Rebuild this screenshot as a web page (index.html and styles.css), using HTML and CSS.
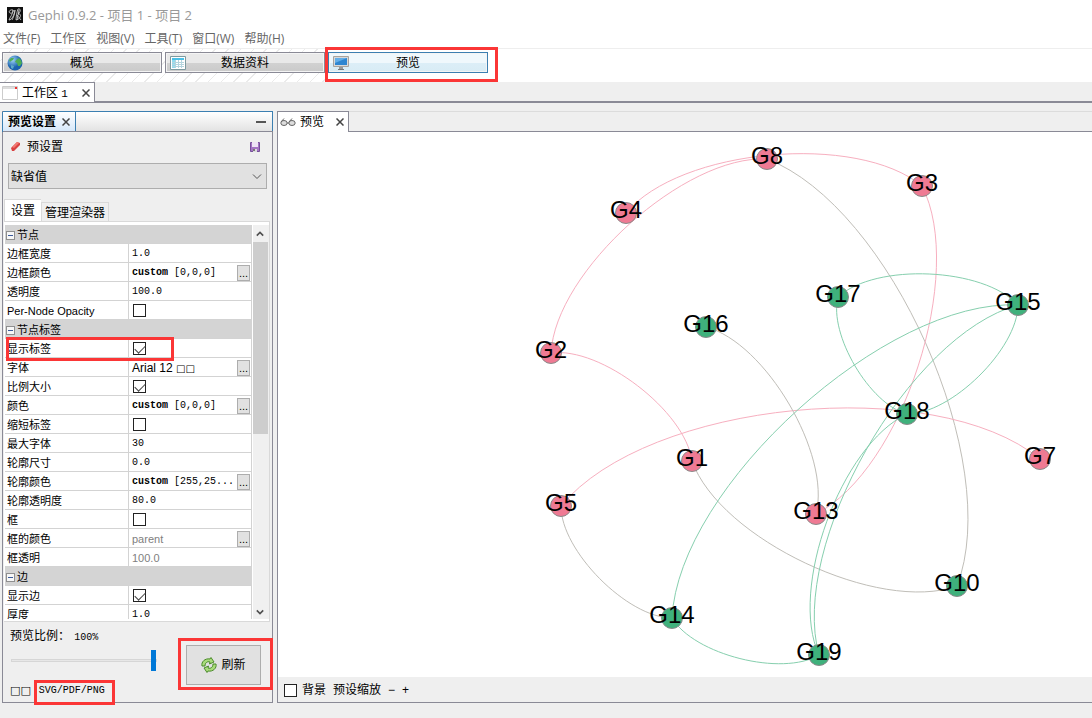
FILE: index.html
```html
<!DOCTYPE html>
<html lang="zh-CN">
<head>
<meta charset="utf-8">
<title>Gephi 0.9.2 - 项目 1 - 项目 2</title>
<link rel="stylesheet" href="styles.css">
</head>
<body>
<div class="app">
  <header class="titlebar">
    <svg class="logo" viewBox="0 0 16 16" aria-hidden="true"><rect width="16" height="16" fill="#111"/><path d="M6 3C3 2 1 5 3 6s4-2 3-3M6 3C6 7 3 10 2 13M2 13c3 0 5-5 6-10M8 3c0 4-2 8-3 10M9 13c0-4 1-8 2-11 3-1 3 3 0 5 4-1 3 5-2 6M10 8l4 5M12 3l-2 10" fill="none" stroke="#ddd" stroke-width=".8"/></svg>
    <span>Gephi 0.9.2 - 项目 1 - 项目 2</span>
  </header>
  <nav class="menubar">
    <button>文件(F)</button><button>工作区</button><button>视图(V)</button><button>工具(T)</button><button>窗口(W)</button><button>帮助(H)</button>
  </nav>
  <div class="modes">
    <button class="mode">
      <svg viewBox="0 0 16 16" aria-hidden="true"><defs><radialGradient id="sea" cx=".35" cy=".3"><stop offset="0" stop-color="#9fd4f5"/><stop offset="1" stop-color="#1b62ae"/></radialGradient></defs><circle cx="8" cy="8" r="7.5" fill="url(#sea)"/><path d="M2 5l2-2 3 0-1 2-2 1-1 1zM9 5l3-2 2 2 1 3-2 3-2 0-1-3-2-1z" fill="#4fae55"/><path d="M4 10l3 1-1 3-2-1z" fill="#5fa9c9"/></svg>
      <span>概览</span>
    </button>
    <button class="mode">
      <svg viewBox="0 0 16 16" aria-hidden="true"><path d="M.5 1.500h15v13H.5z" fill="#fff" stroke="#7d9a9f"/><path d="M2 3h12v2H2z" fill="#4cc0e6"/><path d="M2 5h3v8H2z" fill="#8fdcf0"/><path d="M5.500 5v8M8.500 5v8M11.500 5v8M2 7.500h12M2 9.500h12M2 11.500h12" stroke="#b5d5de"/></svg>
      <span>数据资料</span>
    </button>
    <div class="marked">
      <button class="mode active">
        <svg viewBox="0 0 16 16" aria-hidden="true"><path d="M.5 1.500h15v10H.5z" fill="#d9d9d9" stroke="#a6a39e"/><path d="M2 3h12v7H2z" fill="#2e86d1"/><path d="M2 3h12L2 8z" fill="#63aee8"/><path d="M6 12h4v2H6z" fill="#999"/><path d="M5 14h6v1H5z" fill="#777"/></svg>
        <span>预览</span>
      </button>
      <i class="mark mark-mode"></i>
    </div>
  </div>
  <div class="workspaces">
    <div class="workspace">
      <svg class="winicon" viewBox="0 0 16 14" aria-hidden="true"><path d="M.5.5h15v13H.5z" fill="#fff" stroke="#ccc"/><path d="M1 1h14v2H1z" fill="#ddd"/><path d="M13 1h2v2h-2z" fill="#e33"/></svg>
      <span>工作区 <small>1</small></span>
      <button class="close" aria-label="关闭工作区"><svg viewBox="0 0 8 8"><path d="M.5.5l7 7M7.500.5l-7 7"/></svg></button>
    </div>
  </div>

  <main class="main">
    <section class="side">
      <div class="side-head">
        <div class="side-tab"><b>预览设置</b><button class="close" aria-label="关闭"><svg viewBox="0 0 8 8"><path d="M.5.5l7 7M7.500.5l-7 7"/></svg></button></div>
        <button class="minimize" aria-label="最小化"></button>
      </div>
      <div class="preset">
        <svg class="i10" viewBox="0 0 10 10" aria-hidden="true"><path d="M0 6l6-6 3 1v2L3 9H1z" fill="#d94141"/><path d="M1 5l5-5 2 1-5 5z" fill="#f17a72"/></svg>
        <label for="preset">预设置</label>
        <button class="save" aria-label="保存"><svg viewBox="0 0 10 10"><path d="M.5.5h9v9h-9z" fill="#a574c4" stroke="#76519a"/><path d="M2 0h6v5H2z" fill="#eee4f5"/><path d="M3 7h4v3H3z" fill="#ddd"/><path d="M3 7h2v2H3z" fill="#777"/></svg></button>
      </div>
      <div class="select-wrap">
        <select id="preset"><option>缺省值</option></select>
        <svg viewBox="0 0 10 6" aria-hidden="true"><path d="M1 .5l4 4 4-4"/></svg>
      </div>
      <div class="tabs"><button class="tab on">设置</button><button class="tab">管理渲染器</button></div>
      <div class="sheet">
        <div class="sheet-view">
          <table class="props">
            <colgroup><col class="col-name"><col></colgroup>
            <tr class="group"><th colspan="2"><i class="fold"></i>节点</th></tr>
            <tr><td>边框宽度</td><td class="num">1.0</td></tr>
            <tr><td>边框颜色</td><td class="num"><div class="cell"><span><b>custom</b> [0,0,0]</span><button class="more">...</button></div></td></tr>
            <tr><td>透明度</td><td class="num">100.0</td></tr>
            <tr><td><label for="c1">Per-Node Opacity</label></td><td><input id="c1" type="checkbox"></td></tr>
            <tr class="group"><th colspan="2"><i class="fold"></i>节点标签</th></tr>
            <tr><td class="anchor"><label for="c2">显示标签</label><i class="mark mark-row"></i></td><td><input id="c2" type="checkbox" checked></td></tr>
            <tr><td>字体</td><td class="sans"><div class="cell"><span>Arial 12 <span class="tofu">□□</span></span><button class="more">...</button></div></td></tr>
            <tr><td><label for="c3">比例大小</label></td><td><input id="c3" type="checkbox" checked></td></tr>
            <tr><td>颜色</td><td class="num"><div class="cell"><span><b>custom</b> [0,0,0]</span><button class="more">...</button></div></td></tr>
            <tr><td><label for="c4">缩短标签</label></td><td><input id="c4" type="checkbox"></td></tr>
            <tr><td>最大字体</td><td class="num">30</td></tr>
            <tr><td>轮廓尺寸</td><td class="num">0.0</td></tr>
            <tr><td>轮廓颜色</td><td class="num"><div class="cell"><span><b>custom</b> [255,25...</span><button class="more">...</button></div></td></tr>
            <tr><td>轮廓透明度</td><td class="num">80.0</td></tr>
            <tr><td><label for="c5">框</label></td><td><input id="c5" type="checkbox"></td></tr>
            <tr><td>框的颜色</td><td class="dim"><div class="cell"><span>parent</span><button class="more">...</button></div></td></tr>
            <tr><td>框透明</td><td class="dim">100.0</td></tr>
            <tr class="group"><th colspan="2"><i class="fold"></i>边</th></tr>
            <tr><td><label for="c6">显示边</label></td><td><input id="c6" type="checkbox" checked></td></tr>
            <tr><td>厚度</td><td class="num">1.0</td></tr>
          </table>
        </div>
        <div class="scroll" aria-hidden="true">
          <svg viewBox="0 0 10 6"><path d="M1 5l4-4 4 4"/></svg>
          <i class="thumb"></i>
          <svg viewBox="0 0 10 6"><path d="M1 1l4 4 4-4"/></svg>
        </div>
      </div>
      <div class="foot">
        <div class="foot-left">
          <label for="ratio">预览比例： <span class="mono">100%</span></label>
          <input id="ratio" class="ratio" type="range" min="0" max="100" value="100">
          <div class="export"><span class="boxes">□□</span><button class="formats">SVG/PDF/PNG<i class="mark mark-export"></i></button></div>
        </div>
        <div class="marked">
          <button class="refresh"><svg viewBox="0 0 16 16" aria-hidden="true"><g fill="#a9dc7a" stroke="#4b8a2c" stroke-linejoin="round"><path d="M1 9C0 5 4 1 9 2l1-1.500L13 5 8.500 7 9 5C6 4 4 6 4 9z"/><path d="M15 7c1 4-3 8-8 7l-1 1.500L3 11l4.500-2L7 11c3 1 5-1 5-4z"/></g></svg>刷新</button>
          <i class="mark mark-refresh"></i>
        </div>
      </div>
    </section>

    <section class="view">
      <div class="view-tabs">
        <div class="view-tab">
          <svg class="glasses" viewBox="0 0 16 10" aria-hidden="true"><g fill="#ddd" stroke="#666"><ellipse cx="4" cy="6" rx="3.200" ry="2.500"/><ellipse cx="12" cy="6" rx="3.200" ry="2.500"/></g><path d="M7 6h2M1 5l3-3.500M9 5l3-3.500" fill="none" stroke="#666"/></svg>
          <span>预览</span>
          <button class="close" aria-label="关闭预览"><svg viewBox="0 0 8 8"><path d="M.5.5l7 7M7.500.5l-7 7"/></svg></button>
        </div>
      </div>
      <div class="canvas">
        <svg id="graph" class="graph" viewBox="278 132 814 545" role="img" aria-label="网络图"></svg>
      </div>
      <div class="view-foot">
        <input id="bg" type="checkbox"><label for="bg">背景</label>
        <button>预设缩放</button><button>−</button><button>+</button>
      </div>
    </section>
  </main>
</div>
<script src="graph.js"></script>
</body>
</html>
```
FILE: styles.css
```css
* { box-sizing: border-box; }
body {
  margin: 0;
  background: #efefef;
  color: #000;
  font: 12px/16px "Liberation Sans", "Noto Sans CJK SC", sans-serif;
}
button { margin: 0; padding: 0; border: 0; background: none; font: inherit; color: inherit; }
.app { display: flex; flex-direction: column; height: 100vh; padding-bottom: 15px; overflow: hidden; }

.titlebar {
  display: flex; align-items: center; gap: 5px;
  height: 29px; padding: 0 7px;
  background: #fff; color: #999;
  font-family: "Open Sans", "Noto Sans CJK SC", sans-serif;
  font-size: 13px;
}
.logo { width: 16px; height: 16px; }
.menubar {
  display: flex; gap: 10px; align-items: center;
  height: 20px; padding: 1px 0 0 3px;
  background: #fff; border-bottom: 1px solid #eee; color: #666;
  font-family: "Open Sans", "Noto Sans CJK SC", sans-serif;
}
.modes {
  display: flex; gap: 3px; height: 33px; padding: 3px 2px;
  background:
    linear-gradient(#fff, #fff) 326px 0 / 100% 100% no-repeat,
    repeating-linear-gradient(135deg, #fff 0 8px, #ebebeb 8px 9px);
}
.mode {
  display: flex; align-items: center;
  width: 160px; height: 21px; padding: 0 4px;
  border: 1px solid #8a8a96; box-shadow: inset 0 0 0 1px #f4f4f4;
  background: linear-gradient(#e9e9e9 50%, #d2d2d2 50%, #cacaca);
}
.mode svg { width: 16px; height: 16px; }
.mode span { flex: 1; padding: 1px 16px 0 0; text-align: center; }
.mode.active { border-color: #3c7fb1; background: linear-gradient(#f0f8fc 50%, #dceef7 50%, #d8ecf5); }
.marked { position: relative; }
.mark { position: absolute; border: 3px solid #fb3636; pointer-events: none; z-index: 2; }
.mark-mode { inset: -5px -10px -1px -3px; height: 35px; }

.workspaces { height: 21px; border-bottom: 2px solid #8a8a96; flex: none; }
.workspace {
  display: flex; align-items: center; gap: 4px;
  width: 95px; height: 20px; padding: 0 4px 0 2px;
  background: #fff; border: 1px solid #8a8a96; border-width: 1px 1px 0 0;
}
.workspace span { flex: 1; white-space: nowrap; }
.workspace small { font: 11px "Liberation Mono", monospace; }
.winicon { width: 16px; height: 14px; }
.close { display: flex; }
.close svg { width: 8px; height: 8px; fill: none; stroke: #444; stroke-width: 1.5; }

.main { flex: 1; min-height: 0; display: flex; gap: 4px; padding: 8px 0 0 2px; }
.side { display: flex; flex-direction: column; width: 271px; border: 1px solid #8a8a96; }
.side-head {
  display: flex; justify-content: space-between; align-items: center;
  height: 20px; flex: none; padding-right: 6px; background: linear-gradient(#fff, #e3e3e3);
  border-bottom: 1px solid #8a8a96; box-shadow: 0 -1px #3c7fb1, 1px -1px #3c7fb1, -1px 0 #3c7fb1;
}
.side-tab {
  display: flex; align-items: center; gap: 6px;
  height: 19px; padding: 0 5px; border-right: 1px solid #3c7fb1;
  background: linear-gradient(#fff, #d6e8fa);
}
.minimize { width: 10px; height: 2px; background: #555; }
.preset { display: flex; align-items: center; height: 31px; padding: 0 12px 1px 8px; flex: none; }
.preset label { flex: 1; padding-left: 6px; }
.i10, .save svg { display: block; width: 10px; height: 10px; }
.select-wrap { position: relative; margin: 0 5px; flex: none; }
.select-wrap select {
  appearance: none; display: block; width: 100%; height: 26px; padding: 2px 2px 0;
  border: 1px solid #adadad; border-radius: 0; background: #e1e1e1;
  font: inherit; color: #000;
}
.select-wrap svg { position: absolute; right: 5px; top: 11px; width: 10px; height: 6px; fill: none; stroke: #555; pointer-events: none; }
.tabs { display: flex; align-items: flex-end; height: 32px; flex: none; padding-left: 1px; }
.tab { height: 19px; padding: 1px 3px 0; border: 1px solid #d9d9d9; border-bottom: 0; }
.tab.on { height: 22px; width: 37px; background: #fff; border-right: 0; }

.sheet {
  flex: 1; min-height: 0; display: flex;
  margin: 0 2px 0 1px; padding: 3px 0 2px 1px;
  background: #fff; border: 1px solid #d9d9d9; border-width: 1px 1px 1px 0;
}
.sheet-view { flex: 1; overflow: hidden; }
.props { width: 100%; border-spacing: 0; table-layout: fixed; font-size: 11px; line-height: 16px; }
.col-name { width: 123px; }
.props td, .props th {
  height: 19px; padding: 1px 0 0 2px; border-bottom: 1px solid #d3d3d3;
  text-align: left; font-weight: 400; white-space: nowrap;
}
.props td + td { border-left: 1px solid #d3d3d3; border-right: 1px solid #d3d3d3; padding-left: 3px; }
.group th { background: #d4d4d4; padding-left: 1px; }
.fold {
  display: inline-block; width: 9px; height: 9px; margin-right: 2px;
  border: 1px solid #8f8f8f; vertical-align: -1px;
  background: linear-gradient(#3b5a9a, #3b5a9a) 1px 3px / 5px 1px no-repeat #f7f7f7;
}
.mono, .props .num { font: 10px/16px "Liberation Mono", monospace; }
.props .sans { font-size: 12px; }
.props .dim { color: #808080; }
.tofu { font: 10px/12px "DejaVu Sans", sans-serif; }
.cell { display: flex; justify-content: space-between; align-items: center; height: 17px; }
.more {
  width: 13px; height: 16px; margin-right: 1px;
  border: 1px solid #adadad; background: #e1e1e1; color: #000; font: 11px/12px "Liberation Sans", sans-serif;
}
input[type="checkbox"] {
  appearance: none; display: block; width: 13px; height: 13px; margin: 0 0 0 1px;
  border: 1px solid #222; background: #fff;
}
input[type="checkbox"]:checked::before {
  content: ""; display: block; width: 9px; height: 5px; margin: 2px 1px;
  border: solid #444; border-width: 0 0 1px 1px; transform: rotate(-45deg);
}
.anchor { position: relative; }
.mark-row { left: 1px; top: -2px; width: 168px; height: 24px; }
.scroll { width: 17px; display: flex; flex-direction: column; align-items: center; background: #f0f0f0; padding: 6px 2px 4px 0; border-left: 1px solid #fff; }
.scroll svg { width: 8px; height: 6px; flex: none; fill: none; stroke: #505050; stroke-width: 2; }
.thumb { width: 15px; height: 192px; margin: 5px 0 auto; background: #cdcdcd; }

.foot { display: flex; justify-content: space-between; height: 80px; flex: none; padding-right: 11px; }
.foot-left { display: flex; flex-direction: column; padding: 6px 0 0 7px; }
.foot-left .mono { padding-left: 1px; }
.ratio { appearance: none; display: block; width: 146px; height: 21px; margin: 4px 0 0 1px; background: none; }
.ratio::-webkit-slider-runnable-track { height: 3px; background: #e7e7e7; border: 1px solid #d6d6d6; }
.ratio::-webkit-slider-thumb { appearance: none; width: 5px; height: 21px; margin-top: -10px; background: #0078d7; }
.export { display: flex; align-items: center; gap: 8px; margin-top: 12px; }
.boxes { font: 11px/16px "DejaVu Sans", sans-serif; }
.formats { position: relative; font: 10px/16px "Liberation Mono", monospace; }
.mark-export { inset: -3px -10px -6px -5px; }
.refresh {
  display: flex; align-items: center; justify-content: center; gap: 4px;
  width: 75px; height: 40px; margin-top: 23px;
  border: 1px solid #adadad; background: #e1e1e1;
}
.refresh svg { width: 16px; height: 16px; }
.mark-refresh { left: -8px; right: -12px; top: 16px; height: 52px; }

.view { flex: 1; min-width: 0; display: flex; flex-direction: column; border: 1px solid #8a8a96; border-width: 0 0 1px 1px; }
.view-tabs { height: 21px; flex: none; border-top: 1px solid #dcdcdc; border-bottom: 1px solid #8a8a96; }
.view-tab {
  display: flex; align-items: center; gap: 4px;
  width: 71px; height: 20px; padding: 0 4px 0 2px; background: #fff;
  border: 1px solid #8a8a96; border-width: 0 1px 0 0; box-shadow: 0 -1px #8a8a96;
}
.view-tab span { flex: 1; }
.glasses { width: 16px; height: 10px; }
.canvas { flex: 1; min-height: 0; background: #fff; }
.graph { display: block; width: 100%; height: 100%; }
.graph path { fill: none; stroke-width: 1; }
.graph circle { stroke: #8a8a8a; stroke-width: 1; }
.graph text { font: 24px "Liberation Sans", sans-serif; text-anchor: middle; }
.edge-pink { stroke: #f7afbf; }
.edge-green { stroke: #86cfae; }
.edge-grey { stroke: #c0beb8; }
.node-pink { fill: #ef7a93; }
.node-green { fill: #3fb17c; }
.view-foot { display: flex; align-items: center; gap: 7px; height: 25px; flex: none; padding: 1px 0 0 5px; }
.view-foot label { margin-left: -2px; }
```
FILE: graph.js
```javascript
const nodes = {
  G8: [767, 159, "pink"], G4: [626, 213, "pink"], G2: [551, 353, "pink"],
  G3: [922, 186, "pink"], G1: [692, 461, "pink"], G5: [561, 506, "pink"],
  G13: [816, 514, "pink"], G7: [1040, 459, "pink"],
  G16: [706, 327, "green"], G17: [838, 297, "green"], G15: [1018, 305, "green"],
  G18: [907, 414, "green"], G14: [672, 618, "green"], G10: [957, 586, "green"],
  G19: [819, 655, "green"]
};
const edges = [
  "G4 G3", "G2 G8", "G8 G10", "G3 G13", "G2 G1", "G10 G1", "G5 G7",
  "G14 G5", "G19 G14", "G14 G15", "G19 G15", "G19 G18", "G15 G18", "G17 G15",
  "G18 G17", "G16 G13"
];
const curve = 0.2;
const radius = 10.5;
const svg = document.getElementById("graph");

function add(tag, attrs, text) {
  const el = document.createElementNS("http://www.w3.org/2000/svg", tag);
  for (const key in attrs) el.setAttribute(key, attrs[key]);
  if (text) el.textContent = text;
  svg.appendChild(el);
}

for (const edge of edges) {
  const [a, b] = edge.split(" ").map(id => nodes[id]);
  const dx = (b[0] - a[0]) * curve;
  const dy = (b[1] - a[1]) * curve;
  const c1 = [a[0] + dx + dy, a[1] + dy - dx];
  const c2 = [b[0] - dx + dy, b[1] - dy - dx];
  const tone = a[2] === b[2] ? a[2] : "grey";
  add("path", { d: `M${a[0]} ${a[1]}C${c1} ${c2} ${b[0]} ${b[1]}`, class: `edge-${tone}` });
}
for (const id in nodes) {
  const [cx, cy, tone] = nodes[id];
  add("circle", { cx, cy, r: radius, class: `node-${tone}` });
}
for (const id in nodes) add("text", { x: nodes[id][0], y: nodes[id][1] + 5 }, id);
```
